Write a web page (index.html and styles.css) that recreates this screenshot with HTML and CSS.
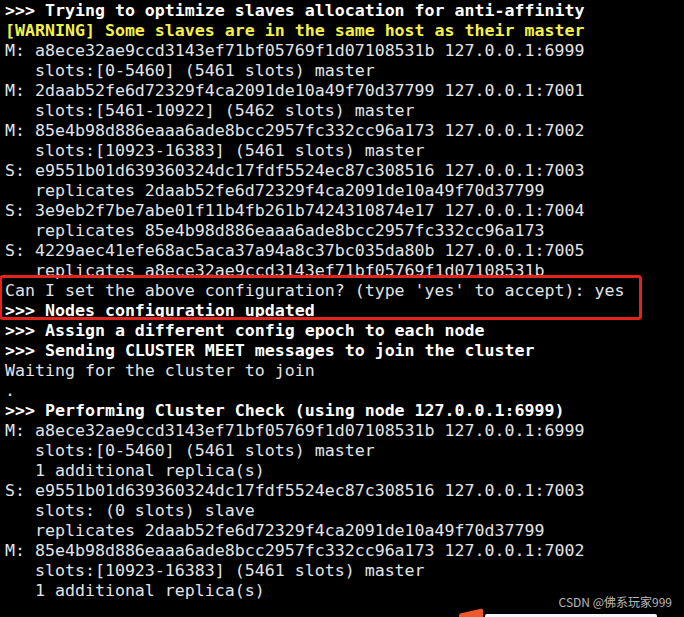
FILE: index.html
```html
<!DOCTYPE html>
<html>
<head>
<meta charset="utf-8">
<link rel="stylesheet" href="styles.css">
</head>
<body>
<div class="term">
<pre class="out"><span class="b">>>> Trying to optimize slaves allocation for anti-affinity</span>
<span class="w">[WARNING] Some slaves are in the same host as their master</span>
M: a8ece32ae9ccd3143ef71bf05769f1d07108531b 127.0.0.1:6999
   slots:[0-5460] (5461 slots) master
M: 2daab52fe6d72329f4ca2091de10a49f70d37799 127.0.0.1:7001
   slots:[5461-10922] (5462 slots) master
M: 85e4b98d886eaaa6ade8bcc2957fc332cc96a173 127.0.0.1:7002
   slots:[10923-16383] (5461 slots) master
S: e9551b01d639360324dc17fdf5524ec87c308516 127.0.0.1:7003
   replicates 2daab52fe6d72329f4ca2091de10a49f70d37799
S: 3e9eb2f7be7abe01f11b4fb261b7424310874e17 127.0.0.1:7004
   replicates 85e4b98d886eaaa6ade8bcc2957fc332cc96a173
S: 4229aec41efe68ac5aca37a94a8c37bc035da80b 127.0.0.1:7005
   replicates a8ece32ae9ccd3143ef71bf05769f1d07108531b
Can I set the above configuration? (type 'yes' to accept): yes
<span class="b">>>> Nodes configuration updated</span>
<span class="b">>>> Assign a different config epoch to each node</span>
<span class="b">>>> Sending CLUSTER MEET messages to join the cluster</span>
Waiting for the cluster to join
.
<span class="b">>>> Performing Cluster Check (using node 127.0.0.1:6999)</span>
M: a8ece32ae9ccd3143ef71bf05769f1d07108531b 127.0.0.1:6999
   slots:[0-5460] (5461 slots) master
   1 additional replica(s)
S: e9551b01d639360324dc17fdf5524ec87c308516 127.0.0.1:7003
   slots: (0 slots) slave
   replicates 2daab52fe6d72329f4ca2091de10a49f70d37799
M: 85e4b98d886eaaa6ade8bcc2957fc332cc96a173 127.0.0.1:7002
   slots:[10923-16383] (5461 slots) master
   1 additional replica(s)</pre>
<div class="highlight"></div>
<div class="mark">CSDN @佛系玩家999</div>
<div class="peek-orange"></div>
<div class="peek-white"></div>
</div>
</body>
</html>
```
FILE: styles.css
```css
html, body {
  margin: 0;
  padding: 0;
  background: #000;
}
.term {
  position: relative;
  width: 684px;
  height: 617px;
  overflow: hidden;
  background: #000;
}
.out {
  margin: 0;
  padding: 1px 0 0 5px;
  font-family: "DejaVu Sans Mono", monospace;
  font-size: 16.6px;
  line-height: 20px;
  color: #e2e4e8;
}
.b {
  font-weight: bold;
  color: #ffffff;
}
.w {
  font-weight: bold;
  color: #f4f046;
}
.highlight {
  position: absolute;
  left: -1px;
  top: 275px;
  width: 637px;
  height: 39px;
  border: 3px solid #e4241c;
  border-radius: 4px;
}
.mark {
  position: absolute;
  right: 12px;
  top: 594px;
  font-family: "Noto Sans CJK SC", "Noto Sans", sans-serif;
  font-size: 12px;
  line-height: 16px;
  color: #b8b8b8;
}
.peek-orange {
  position: absolute;
  left: 459px;
  top: 611px;
  width: 24px;
  height: 10px;
  background: #f0582a;
  transform: skewY(-12deg);
  border-radius: 2px;
}
.peek-white {
  position: absolute;
  left: 485px;
  top: 614px;
  width: 172px;
  height: 6px;
  background: #f4f6fa;
  border-radius: 2px;
}
```
